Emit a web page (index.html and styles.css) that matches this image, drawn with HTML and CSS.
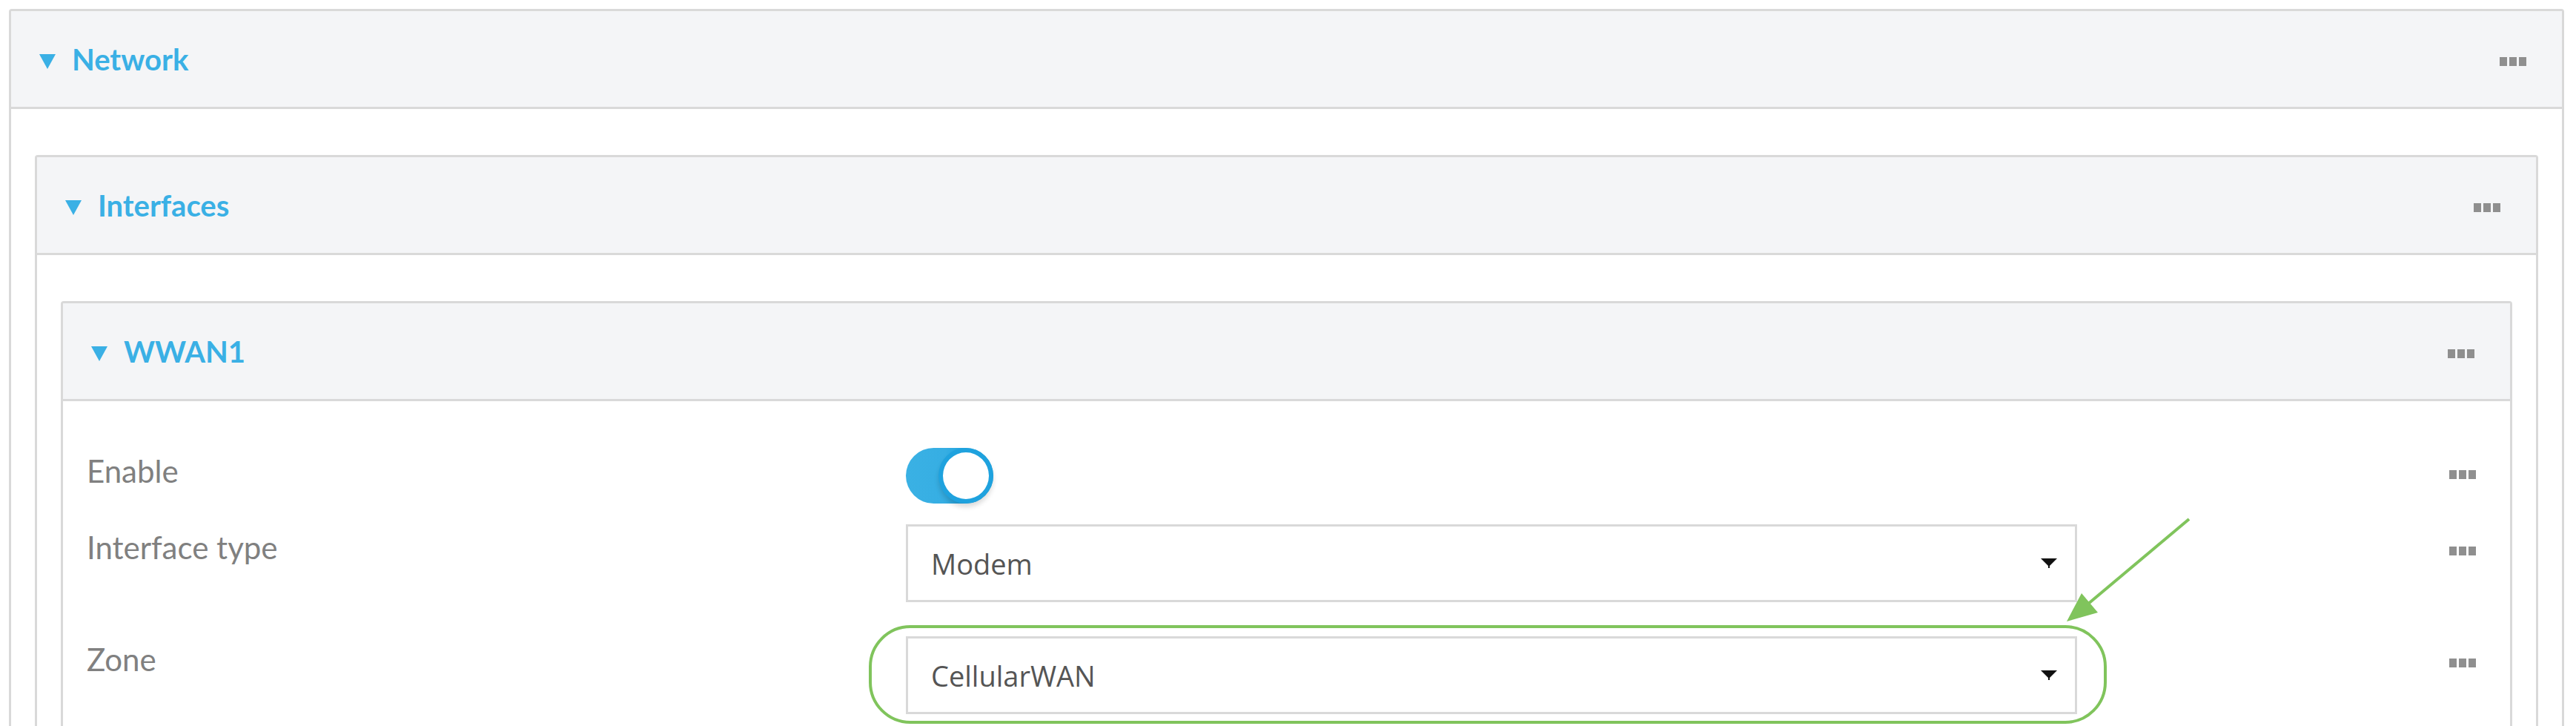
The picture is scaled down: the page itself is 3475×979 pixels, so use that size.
FILE: index.html
```html
<!DOCTYPE html>
<html lang="en">
<head>
<meta charset="utf-8">
<title>Network - WWAN1</title>
<link rel="stylesheet" href="styles.css">
</head>
<body>
<section class="panel">
  <div class="panel-head">
    <svg class="caret" width="22" height="20" viewBox="0 0 22 20"><polygon points="0,0 22,0 11,20" fill="#3ab0e5"/></svg>
    <h2 class="panel-title">Network</h2>
    <span class="more"><i></i><i></i><i></i></span>
  </div>
  <div class="panel-body">
    <section class="panel">
      <div class="panel-head">
        <svg class="caret" width="22" height="20" viewBox="0 0 22 20"><polygon points="0,0 22,0 11,20" fill="#3ab0e5"/></svg>
        <h2 class="panel-title">Interfaces</h2>
        <span class="more"><i></i><i></i><i></i></span>
      </div>
      <div class="panel-body">
        <section class="panel">
          <div class="panel-head">
            <svg class="caret" width="22" height="20" viewBox="0 0 22 20"><polygon points="0,0 22,0 11,20" fill="#3ab0e5"/></svg>
            <h2 class="panel-title">WWAN1</h2>
            <span class="more"><i></i><i></i><i></i></span>
          </div>
          <div class="panel-body fields">
            <div class="field field-toggle">
              <div class="field-label">Enable</div>
              <div class="field-control">
                <span class="toggle"><span class="knob"></span></span>
              </div>
              <span class="more field-more"><i></i><i></i><i></i></span>
            </div>
            <div class="field field-spaced">
              <div class="field-label">Interface type</div>
              <div class="field-control">
                <div class="select"><span>Modem</span><svg class="select-arrow" width="22" height="13" viewBox="0 0 22 13"><polygon points="0,0 22,0 11,11" fill="#111"/><rect x="10" y="8" width="2" height="5" fill="#111"/></svg></div>
              </div>
              <span class="more field-more"><i></i><i></i><i></i></span>
            </div>
            <div class="field">
              <div class="field-label">Zone</div>
              <div class="field-control">
                <div class="select"><span>CellularWAN</span><svg class="select-arrow" width="22" height="13" viewBox="0 0 22 13"><polygon points="0,0 22,0 11,11" fill="#111"/><rect x="10" y="8" width="2" height="5" fill="#111"/></svg></div>
                <div class="highlight"></div>
              </div>
              <span class="more field-more"><i></i><i></i><i></i></span>
            </div>
          </div>
        </section>
      </div>
    </section>
  </div>
</section>
<svg class="callout-arrow" width="200" height="160" viewBox="0 0 200 160">
  <line x1="183" y1="10" x2="46" y2="125" stroke="#80c45c" stroke-width="4"/>
  <polygon points="18,148 38,110 60,136" fill="#80c45c"/>
</svg>
</body>
</html>
```

FILE: styles.css
```css
html, body {
  background: #ffffff;
}

body {
  margin: 0;
  padding: 12px 16px 0 12px;
  position: relative;
  font-family: Lato, "Open Sans", "Noto Sans", sans-serif;
  overflow: hidden;
}

.panel {
  border: 3px solid #d9d9d9;
  border-bottom: 0;
  border-radius: 4px 4px 0 0;
  background: #ffffff;
}

.panel-head {
  height: 129px;
  display: flex;
  align-items: center;
  padding: 0 48px 0 38px;
  background: #f4f5f7;
  border-bottom: 3px solid #d9d9d9;
}

.caret {
  flex: none;
  margin-top: 6px;
  margin-right: 22px;
}

.panel-title {
  margin: 0;
  font-family: Lato, "Open Sans", sans-serif;
  font-weight: 700;
  font-size: 40px;
  line-height: 48px;
  color: #3ab0e5;
}

.more {
  margin-left: auto;
  display: flex;
  gap: 3px;
  flex: none;
}

.panel-head .more {
  margin-top: 6px;
}

.more i {
  display: block;
  width: 10px;
  height: 12px;
  background: #8f8f8f;
}

.panel-body {
  padding: 62px 32px 40px 32px;
}

.fields {
  padding: 63px 46px 40px 32px;
}

.field {
  display: grid;
  grid-template-columns: 1105px 1580px 1fr;
  align-items: start;
}

.field-toggle {
  height: 103px;
}

.field-spaced {
  margin-bottom: 46px;
}

.field-label {
  padding-top: 6px;
  font-size: 42px;
  line-height: 50px;
  color: #808080;
}

.field-control {
  position: relative;
}

.field-more {
  justify-self: end;
  margin-top: 30px;
}

.toggle {
  display: flex;
  justify-content: flex-end;
  width: 118px;
  height: 75px;
  border-radius: 38px;
  background: linear-gradient(90deg, #3ab1e4 0%, #36aee3 45%, #1ea2de 70%, #1ea2de 100%);
}

.knob {
  box-sizing: border-box;
  width: 74px;
  height: 75px;
  border-radius: 50%;
  border: 6px solid #1fa2de;
  background: #ffffff;
  box-shadow: 0 5px 6px rgba(0, 0, 0, 0.14);
}

.select {
  box-sizing: border-box;
  height: 105px;
  border: 3px solid #d9d9d9;
  display: flex;
  align-items: center;
  justify-content: space-between;
  padding: 0 24px 0 31px;
  font-family: "Open Sans", "Noto Sans", sans-serif;
  font-size: 38px;
  color: #555555;
  background: #ffffff;
}

.select-arrow {
  flex: none;
}

.highlight {
  position: absolute;
  left: -50px;
  top: -15px;
  width: 1670px;
  height: 133px;
  box-sizing: border-box;
  border: 4px solid #80c45c;
  border-radius: 56px;
  pointer-events: none;
}

.callout-arrow {
  position: absolute;
  left: 2770px;
  top: 690px;
}
```
